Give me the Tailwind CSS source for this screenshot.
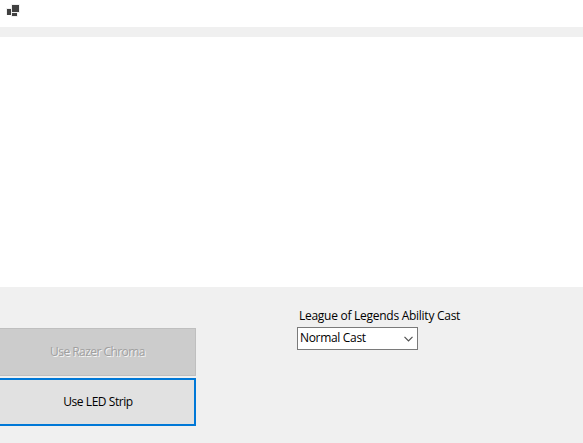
<!DOCTYPE html>
<html lang="en">
<head>
<meta charset="utf-8">
<title>Settings</title>
<script src="https://cdn.jsdelivr.net/npm/@tailwindcss/browser@4"></script>
</head>
<body class="flex h-[443px] w-[583px] flex-col overflow-hidden bg-[#f0f0f0] font-['Open_Sans','Noto_Sans',sans-serif] text-[12px] leading-4 text-black">
  <header class="h-[27px] shrink-0 bg-white pt-1 pl-1.5">
    <svg class="block" width="14" height="13" viewBox="0 0 14 13" shape-rendering="crispEdges">
      <path fill="#f0f0f0" d="M5 0h9v9h-2v4H5v-2H0V4h5z"/>
      <path fill="#404040" d="M1 5h4v6H1zM6 1h7v7H6zM6 9h5v3H6z"/>
    </svg>
  </header>
  <section class="mt-2.5 h-[250px] shrink-0 bg-white"></section>
  <main class="flex">
    <div class="flex w-[196px] flex-col gap-0.5 pt-[41px]">
      <button disabled class="flex h-12 items-center justify-center border border-l-0 border-[#bfbfbf] bg-[#cccccc] tracking-[-0.55px] text-[#a0a0a0] [text-shadow:1px_1px_0_#f4f4f4]">Use Razer Chroma</button>
      <button class="flex h-12 items-center justify-center border-2 border-l-0 border-[#0078d7] bg-[#e1e1e1] pl-0.5 tracking-[-0.44px]">Use LED Strip</button>
    </div>
    <div class="ml-[101px] pt-[21px]">
      <label class="block pl-0.5 whitespace-nowrap tracking-[-0.27px]">League of Legends Ability Cast</label>
      <div class="mt-[3px] flex h-[23px] w-[121px] items-center justify-between border border-[#7a7a7a] bg-white pr-1 pb-px pl-0.5 tracking-[-0.32px]">
        <span>Normal Cast</span>
        <svg class="mt-0.5" width="9" height="6" viewBox="0 0 9 6" fill="none" stroke="#505050" stroke-width="1.2"><path d="M.5 .8 4.5 4.8 8.5 .8"/></svg>
      </div>
    </div>
  </main>
</body>
</html>
